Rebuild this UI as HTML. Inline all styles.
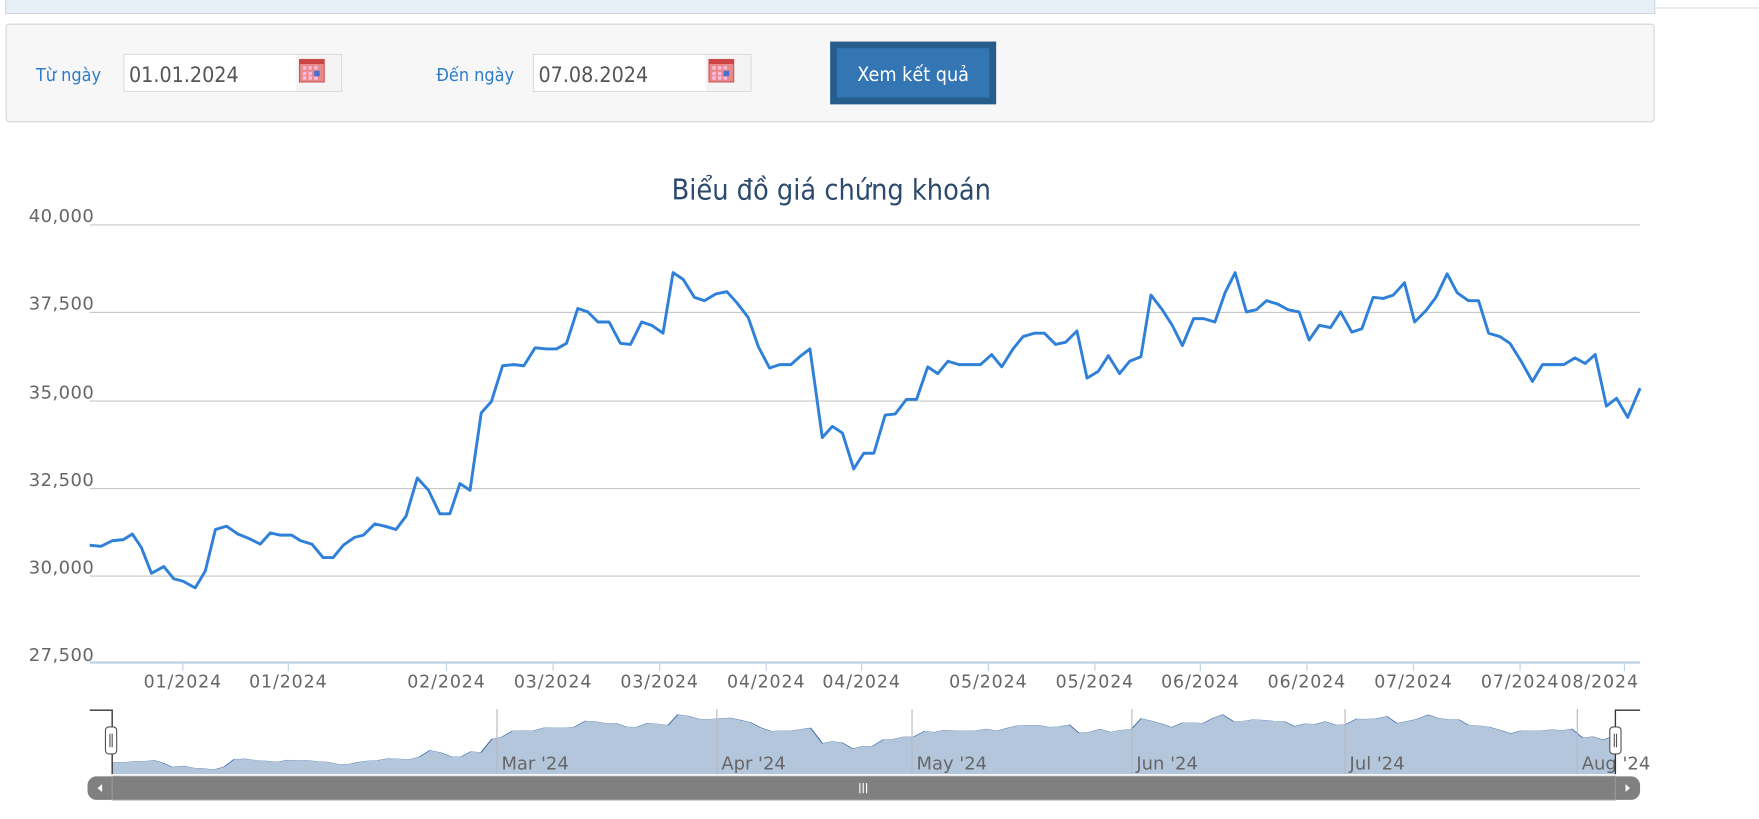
<!DOCTYPE html>
<html><head><meta charset="utf-8"><style>
html,body{margin:0;padding:0;background:#fff;width:1759px;height:819px;overflow:hidden}
svg{display:block}
text{font-family:"DejaVu Sans","Liberation Sans",sans-serif}
.c{font-family:"DejaVu Sans Condensed","DejaVu Sans",sans-serif}
</style></head><body>
<svg width="1759" height="819" viewBox="0 0 1568 730" xmlns="http://www.w3.org/2000/svg">
<defs>
<polyline id="pl" points="80,486 90,487 100,482 110,481 118,476 126,488 135,511 146,505 155,516 163,518 174,524 183,509 192,472 202,469 212,476 222,480 232,485 241,475 250,477 260,477 268,482 278,485 288,497 297,497 306,486 316,479 324,477 334,467 343,469 353,472 362,460 372,426 382,437 392,458 401,458 410,431 419,437 429,368 438,358 448,326 458,325 467,326 477,310 487,311 496,311 505,306 515,275 524,278 533,287 543,287 553,306 562,307 572,287 581,290 591,297 600,243 609,249 619,265 628,268 638,262 648,260 657,270 667,283 676,309 686,328 695,325 705,325 714,317 722,311 733,390 742,380 751,386 761,418 770,404 779,404 789,370 798,369 808,356 817,356 827,327 836,333 845,322 855,325 865,325 874,325 884,316 893,327 903,311 912,300 922,297 931,297 941,307 950,305 960,295 969,337 979,331 988,317 998,333 1007,322 1017,318 1026,263 1036,276 1045,290 1054,308 1064,284 1073,284 1083,287 1092,261 1101,243 1111,278 1120,276 1129,268 1139,271 1148,276 1158,278 1167,303 1176,290 1186,292 1195,278 1205,296 1214,293 1224,265 1233,266 1242,263 1252,252 1261,287 1271,277 1280,265 1290,244 1299,261 1309,268 1318,268 1327,297 1337,300 1346,306 1356,322 1366,340 1375,325 1385,325 1394,325 1404,319 1413,324 1422,316 1432,362 1441,355 1451,372 1462,346"/>
</defs>
<rect x="5" y="-1" width="1470" height="13" fill="#e8f0f7" stroke="#cfd8e0"/>
<line x1="1475" y1="7" x2="1568" y2="7" stroke="#ddd"/>
<rect x="5.5" y="21.5" width="1469" height="87" rx="3" fill="#f7f7f7" stroke="#d4d4d4"/>
<text class="c" x="32" y="72" font-size="16" fill="#2e7cc9">Từ ngày</text>
<rect x="110.5" y="48.5" width="194" height="33" fill="#fff" stroke="#ddd"/>
<text class="c" x="115" y="73" font-size="19" fill="#555">01.01.2024</text>
<rect x="264" y="49" width="40" height="32" fill="#f4f4f4"/>
<g transform="translate(267,53)"><rect width="22" height="20" fill="#e98a8a" stroke="#c55"/><rect y="0" width="22" height="4" fill="#c44"/><g fill="#fbd"><rect x="3" y="6" width="3" height="3"/><rect x="8" y="6" width="3" height="3"/><rect x="13" y="6" width="3" height="3"/><rect x="3" y="11" width="3" height="3"/><rect x="8" y="11" width="3" height="3"/><rect x="3" y="15" width="3" height="3"/><rect x="8" y="15" width="3" height="3"/><rect x="13" y="15" width="3" height="3"/></g><rect x="13" y="10" width="5" height="5" fill="#4a6fd0"/></g>
<text class="c" x="389" y="72" font-size="16" fill="#2e7cc9">Đến ngày</text>
<rect x="475.5" y="48.5" width="194" height="33" fill="#fff" stroke="#ddd"/>
<text class="c" x="480" y="73" font-size="19" fill="#555">07.08.2024</text>
<rect x="629" y="49" width="40" height="32" fill="#f4f4f4"/>
<g transform="translate(632,53)"><rect width="22" height="20" fill="#e98a8a" stroke="#c55"/><rect y="0" width="22" height="4" fill="#c44"/><g fill="#fbd"><rect x="3" y="6" width="3" height="3"/><rect x="8" y="6" width="3" height="3"/><rect x="13" y="6" width="3" height="3"/><rect x="3" y="11" width="3" height="3"/><rect x="8" y="11" width="3" height="3"/><rect x="3" y="15" width="3" height="3"/><rect x="8" y="15" width="3" height="3"/><rect x="13" y="15" width="3" height="3"/></g><rect x="13" y="10" width="5" height="5" fill="#4a6fd0"/></g>
<rect x="740" y="37" width="148" height="56" fill="#275d8c"/>
<rect x="746" y="43" width="136" height="44" fill="#3476b3"/>
<text class="c" x="814" y="72" font-size="17.5" fill="#fff" text-anchor="middle">Xem kết quả</text>
<text class="c" x="741" y="178" font-size="25.5" fill="#2b4a6e" text-anchor="middle">Biểu đồ giá chứng khoán</text>
<g stroke="#c8c8c8" stroke-width="1">
<line x1="80" y1="200.5" x2="1462" y2="200.5"/><line x1="80" y1="278.5" x2="1462" y2="278.5"/><line x1="80" y1="357.5" x2="1462" y2="357.5"/><line x1="80" y1="435.5" x2="1462" y2="435.5"/><line x1="80" y1="513.5" x2="1462" y2="513.5"/>
</g>
<line x1="80" y1="590.5" x2="1462" y2="590.5" stroke="#c0d0e0" stroke-width="2"/>
<g font-size="16" fill="#666" text-anchor="end" letter-spacing="0.4">
<text x="84" y="198">40,000</text><text x="84" y="276">37,500</text><text x="84" y="355">35,000</text><text x="84" y="433">32,500</text><text x="84" y="511">30,000</text><text x="84" y="589">27,500</text>
</g>
<g stroke="#c0d0e0"><line x1="163" y1="590" x2="163" y2="598"/><line x1="257" y1="590" x2="257" y2="598"/><line x1="398" y1="590" x2="398" y2="598"/><line x1="493" y1="590" x2="493" y2="598"/><line x1="588" y1="590" x2="588" y2="598"/><line x1="683" y1="590" x2="683" y2="598"/><line x1="768" y1="590" x2="768" y2="598"/><line x1="881" y1="590" x2="881" y2="598"/><line x1="976" y1="590" x2="976" y2="598"/><line x1="1070" y1="590" x2="1070" y2="598"/><line x1="1165" y1="590" x2="1165" y2="598"/><line x1="1260" y1="590" x2="1260" y2="598"/><line x1="1355" y1="590" x2="1355" y2="598"/><line x1="1448" y1="590" x2="1448" y2="598"/></g>
<g font-size="15.5" fill="#666" text-anchor="middle" letter-spacing="0.8">
<text x="163" y="613">01/2024</text><text x="257" y="613">01/2024</text><text x="398" y="613">02/2024</text><text x="493" y="613">03/2024</text><text x="588" y="613">03/2024</text><text x="683" y="613">04/2024</text><text x="768" y="613">04/2024</text><text x="881" y="613">05/2024</text><text x="976" y="613">05/2024</text><text x="1070" y="613">06/2024</text><text x="1165" y="613">06/2024</text><text x="1260" y="613">07/2024</text><text x="1355" y="613">07/2024</text><text x="1426" y="613">08/2024</text>
</g>
<use href="#pl" fill="none" stroke="#2f80d8" stroke-width="2.6" stroke-linejoin="round"/>
<g transform="translate(22.43,594.6) scale(0.9696,0.1744)">
<polygon fill="#b4c6dc" points="80,547 80,486 90,487 100,482 110,481 118,476 126,488 135,511 146,505 155,516 163,518 174,524 183,509 192,472 202,469 212,476 222,480 232,485 241,475 250,477 260,477 268,482 278,485 288,497 297,497 306,486 316,479 324,477 334,467 343,469 353,472 362,460 372,426 382,437 392,458 401,458 410,431 419,437 429,368 438,358 448,326 458,325 467,326 477,310 487,311 496,311 505,306 515,275 524,278 533,287 543,287 553,306 562,307 572,287 581,290 591,297 600,243 609,249 619,265 628,268 638,262 648,260 657,270 667,283 676,309 686,328 695,325 705,325 714,317 722,311 733,390 742,380 751,386 761,418 770,404 779,404 789,370 798,369 808,356 817,356 827,327 836,333 845,322 855,325 865,325 874,325 884,316 893,327 903,311 912,300 922,297 931,297 941,307 950,305 960,295 969,337 979,331 988,317 998,333 1007,322 1017,318 1026,263 1036,276 1045,290 1054,308 1064,284 1073,284 1083,287 1092,261 1101,243 1111,278 1120,276 1129,268 1139,271 1148,276 1158,278 1167,303 1176,290 1186,292 1195,278 1205,296 1214,293 1224,265 1233,266 1242,263 1252,252 1261,287 1271,277 1280,265 1290,244 1299,261 1309,268 1318,268 1327,297 1337,300 1346,306 1356,322 1366,340 1375,325 1385,325 1394,325 1404,319 1413,324 1422,316 1432,362 1441,355 1451,372 1462,346 1462,547"/>
<use href="#pl" fill="none" stroke="#4472aa" stroke-width="1.3" vector-effect="non-scaling-stroke"/>
</g>
<g stroke="#b8b8c0" stroke-width="1"><line x1="443" y1="632" x2="443" y2="690"/><line x1="639" y1="632" x2="639" y2="690"/><line x1="813" y1="632" x2="813" y2="690"/><line x1="1009" y1="632" x2="1009" y2="690"/><line x1="1199" y1="632" x2="1199" y2="690"/><line x1="1406" y1="632" x2="1406" y2="690"/></g>
<rect x="80" y="632" width="20" height="60" fill="#fff"/>
<rect x="1440" y="632" width="22" height="60" fill="#fff"/>
<g font-size="16" fill="#666"><text x="447" y="686">Mar '24</text><text x="643" y="686">Apr '24</text><text x="817" y="686">May '24</text><text x="1013" y="686">Jun '24</text><text x="1203" y="686">Jul '24</text><text x="1410" y="686">Aug '24</text></g>
<path d="M80,633 H100 V690" fill="none" stroke="#333" stroke-width="1.2"/>
<path d="M1462,633 H1440 V690" fill="none" stroke="#333" stroke-width="1.2"/>
<rect x="94" y="648" width="10" height="24" rx="3" fill="#fff" stroke="#555"/>
<line x1="98" y1="654" x2="98" y2="666" stroke="#555"/><line x1="100" y1="654" x2="100" y2="666" stroke="#555"/>
<rect x="1435" y="648" width="10" height="24" rx="3" fill="#fff" stroke="#555"/>
<line x1="1439" y1="654" x2="1439" y2="666" stroke="#555"/><line x1="1441" y1="654" x2="1441" y2="666" stroke="#555"/>
<rect x="78" y="692" width="1384" height="21" rx="8" fill="#808080"/>
<rect x="100" y="692" width="1340" height="21" fill="#808080" stroke="#9a9a9a"/>
<path d="M91,699 L87,702.5 L91,706 Z" fill="#fff"/>
<path d="M1449,699 L1453,702.5 L1449,706 Z" fill="#fff"/>
<g stroke="#fff"><line x1="766.5" y1="698" x2="766.5" y2="707"/><line x1="769.5" y1="698" x2="769.5" y2="707"/><line x1="772.5" y1="698" x2="772.5" y2="707"/></g>
</svg>
</body></html>
